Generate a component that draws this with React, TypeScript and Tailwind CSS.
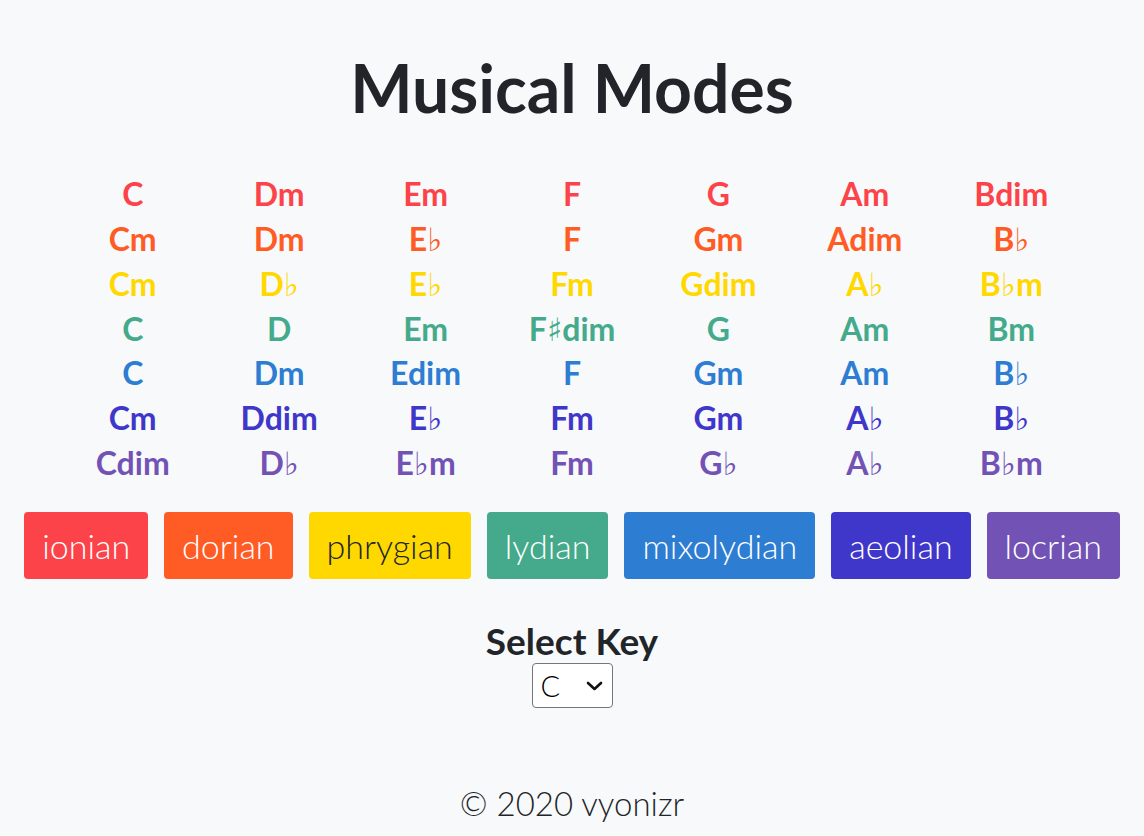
import React from "react";

const modes = [
  { name: "ionian", bg: "bg-[#fc4349]", text: "text-[#fc4349]", btnText: "text-white", chords: ["C", "Dm", "Em", "F", "G", "Am", "Bdim"] },
  { name: "dorian", bg: "bg-[#ff5b25]", text: "text-[#ff5b25]", btnText: "text-white", chords: ["Cm", "Dm", "E♭", "F", "Gm", "Adim", "B♭"] },
  { name: "phrygian", bg: "bg-[#ffd800]", text: "text-[#ffd800]", btnText: "text-[#212529]", chords: ["Cm", "D♭", "E♭", "Fm", "Gdim", "A♭", "B♭m"] },
  { name: "lydian", bg: "bg-[#44aa8b]", text: "text-[#44aa8b]", btnText: "text-white", chords: ["C", "D", "Em", "F♯dim", "G", "Am", "Bm"] },
  { name: "mixolydian", bg: "bg-[#2d7dd2]", text: "text-[#2d7dd2]", btnText: "text-white", chords: ["C", "Dm", "Edim", "F", "Gm", "Am", "B♭"] },
  { name: "aeolian", bg: "bg-[#3f37c9]", text: "text-[#3f37c9]", btnText: "text-white", chords: ["Cm", "Ddim", "E♭", "Fm", "Gm", "A♭", "B♭"] },
  { name: "locrian", bg: "bg-[#7252b4]", text: "text-[#7252b4]", btnText: "text-white", chords: ["Cdim", "D♭", "E♭m", "Fm", "G♭", "A♭", "B♭m"] },
];

function Chord({ c }: { c: string }) {
  const parts = c.split(/([♭♯])/);
  return (
    <div className="h-[44.8px] leading-[44.8px] overflow-visible whitespace-nowrap">
      {parts.map((p, i) =>
        p === "♭" || p === "♯" ? (
          <span key={i} className="font-bold leading-none" style={{ fontFamily: '"DejaVu Sans", sans-serif' }}>
            {p}
          </span>
        ) : (
          <span key={i}>{p}</span>
        )
      )}
    </div>
  );
}

export default function App() {
  return (
    <div
      className="min-h-[836px] w-full bg-[#f8f9fa] text-[#212529] flex flex-col items-center"
      style={{ fontFamily: 'Lato, "DejaVu Sans", sans-serif' }}
    >
      <h1 className="mt-[48px] text-[66px] leading-[1.2] font-bold">Musical Modes</h1>

      <div className="mt-[45px] w-[1025px] flex flex-col">
        {modes.map((m) => (
          <div key={m.name} className={`grid grid-cols-7 h-[44.8px] text-center text-[32px] font-bold ${m.text}`}>
            {m.chords.map((c, i) => (
              <Chord key={i} c={c} />
            ))}
          </div>
        ))}
      </div>

      <div className="mt-[26px] flex gap-4">
        {modes.map((m) => (
          <button
            key={m.name}
            className={`h-[67px] px-[18px] rounded-[4px] flex items-center text-[34px] font-light ${m.bg} ${m.btnText}`}
          >
            {m.name}
          </button>
        ))}
      </div>

      <div className="mt-[40px] text-[37px] leading-[1.2] font-bold">Select Key</div>
      <div className="relative mt-0">
        <select
          className="appearance-none w-[81px] h-[45px] border border-[#767676] rounded-[4px] bg-white pl-[8px] text-[29px] font-light text-black outline-none"
          defaultValue="C"
        >
          {["C", "C♯", "D", "E♭", "E", "F", "F♯", "G", "A♭", "A", "B♭", "B"].map((k) => (
            <option key={k} value={k}>{k}</option>
          ))}
        </select>
        <svg
          className="pointer-events-none absolute right-[10px] top-[18px]"
          width="17"
          height="10"
          viewBox="0 0 17 10"
          fill="none"
        >
          <path d="M2 2 L8.5 8 L15 2" stroke="#111" strokeWidth="2.6" strokeLinecap="round" strokeLinejoin="round" />
        </svg>
      </div>

      <footer className="mt-[71px] text-[33px] leading-[48px] font-light">© 2020 vyonizr</footer>
    </div>
  );
}
